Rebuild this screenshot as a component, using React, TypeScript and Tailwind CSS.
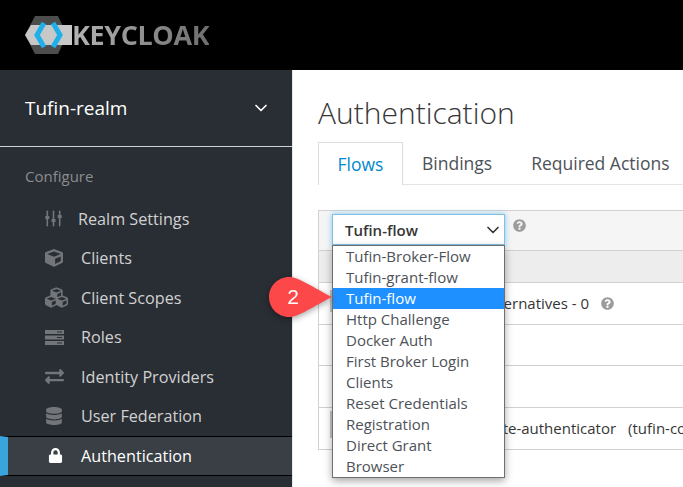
import { FaCube, FaCubes, FaDatabase, FaExchangeAlt, FaLock, FaQuestionCircle } from "react-icons/fa";
import { LuChevronDown } from "react-icons/lu";
import type { ReactNode } from "react";

const SlidersIcon = () => (
  <svg width="17" height="17" viewBox="0 0 17 17" fill="#72767b">
    <rect x="1.5" y="0.5" width="1.6" height="16" rx="0.8" />
    <rect x="7.7" y="0.5" width="1.6" height="16" rx="0.8" />
    <rect x="13.9" y="0.5" width="1.6" height="16" rx="0.8" />
    <rect x="0.3" y="6" width="4" height="3" rx="0.5" />
    <rect x="6.5" y="9" width="4" height="3" rx="0.5" />
    <rect x="12.7" y="5" width="4" height="3" rx="0.5" />
  </svg>
);

const ServiceIcon = () => (
  <svg width="19" height="15" viewBox="0 0 19 15" fill="#72767b">
    <path d="M0 0h19v4H0zM0 5.5h19v4H0zM0 11h19v4H0z" />
    <path d="M12 1.5h5v1h-5zM12 7h5v1h-5zM12 12.5h5v1h-5z" fill="#292e34" />
  </svg>
);

const navItems: { label: string; icon: ReactNode; textClass: string; active?: boolean }[] = [
  { label: "Realm Settings", icon: <SlidersIcon />, textClass: "ml-[16px]" },
  { label: "Clients", icon: <FaCube size={18} color="#72767b" />, textClass: "ml-[18px]" },
  { label: "Client Scopes", icon: <FaCubes size={23} color="#72767b" />, textClass: "ml-[13px]" },
  { label: "Roles", icon: <ServiceIcon />, textClass: "ml-[17px]" },
  { label: "Identity Providers", icon: <FaExchangeAlt size={19} color="#72767b" />, textClass: "ml-[17px]" },
  { label: "User Federation", icon: <FaDatabase size={18} color="#72767b" />, textClass: "ml-[18px]" },
  { label: "Authentication", icon: <FaLock size={15} color="#ffffff" />, textClass: "ml-[18px]", active: true },
];

const flowOptions = [
  "Tufin-Broker-Flow",
  "Tufin-grant-flow",
  "Tufin-flow",
  "Http Challenge",
  "Docker Auth",
  "First Broker Login",
  "Clients",
  "Reset Credentials",
  "Registration",
  "Direct Grant",
  "Browser",
];

function Logo() {
  return (
    <div className="flex items-center pl-[25px] h-[70px] bg-black shrink-0">
      <svg width="47" height="40" viewBox="0 0 47 40" className="shrink-0 blur-[0.4px]">
        <path d="M10 1h23l9 19-9 19H10L0 20z" fill="#4d4d4d" />
        <path d="M0 20l6-10h41v20H6z" fill="#c8c8c8" />
        <path d="M19 8l-7 12 7 12" fill="none" stroke="#1fb0ea" strokeWidth="5" />
        <path d="M28 8l7 12-7 12" fill="none" stroke="#1fb0ea" strokeWidth="5" />
      </svg>
      <span className="mb-[1px] text-[27px] font-bold leading-none tracking-[-0.4px] text-transparent bg-clip-text bg-gradient-to-r from-[#b4b4b4] to-[#6e6e6e] blur-[0.4px]">KEYCLOAK</span>
    </div>
  );
}

function Sidebar() {
  return (
    <aside className="w-[292px] shrink-0 bg-[#292e34]">
      <div className="flex items-center justify-between h-[77px] pl-[25px] pr-[21px] border-b border-[#d1d1d1]">
        <span className="text-[19px] text-white">Tufin-realm</span>
        <LuChevronDown size={20} color="#ffffff" strokeWidth={2} />
      </div>
      <div className="pl-[25px] pt-[19px] pb-[13px] text-[15px] leading-[20px] text-[#8b8d8f]">Configure</div>
      <nav className="flex flex-col">
        {navItems.map((item) => (
          <div
            key={item.label}
            className={`flex items-center h-[39.5px] text-[16.2px] ${
              item.active
                ? "bg-[#393f44] text-white border-y border-black border-l-8 border-l-[#39a5dc] pl-[37px]"
                : "pl-[45px] text-[#d1d1d1]"
            }`}
          >
            <span className={item.active ? "w-[15px] ml-[3px] flex justify-center" : "flex justify-center"}>{item.icon}</span>
            <span className={item.textClass}>{item.label}</span>
          </div>
        ))}
      </nav>
    </aside>
  );
}

function FlowDropdown() {
  return (
    <div className="absolute left-[13px] top-[34px] w-[173px] bg-white border border-[#6f6f6f] shadow-[0_3px_8px_rgba(0,0,0,0.35)] z-10">
      {flowOptions.map((option) => (
        <div
          key={option}
          className={`h-[21px] pl-[13px] text-[15px] leading-[21px] ${
            option === "Tufin-flow" ? "bg-[#1e90ff] text-white" : "text-[#4d5258]"
          }`}
        >
          {option}
        </div>
      ))}
    </div>
  );
}

function FlowTable() {
  return (
    <div className="relative mt-[25px] ml-[25px] border border-r-0 border-[#d1d1d1] text-[#363636]">
      <div className="flex items-start h-[40px] pl-[13px] pt-[3px] bg-[#f5f5f5] border-b border-[#d1d1d1]">
        <div className="flex items-center justify-between w-[173px] h-[31px] pl-[12px] pr-[1px] bg-white border border-[#7dc3e8] shadow-[0_0_6px_rgba(57,165,220,0.6)]">
          <span className="pt-[1px] text-[15px] font-semibold text-[#363636]">Tufin-flow</span>
          <LuChevronDown size={20} color="#333333" strokeWidth={2} />
        </div>
        <FaQuestionCircle size={13} color="#9c9c9c" className="ml-[8px] mt-[5px]" />
      </div>
      <div className="h-[32px] bg-[#ededed] border-b border-[#d1d1d1]" />
      <div className="relative flex items-center h-[42px] pl-[166px] bg-white border-b border-[#d1d1d1]">
        <div className="absolute left-[11px] top-[7px] w-[4px] h-[22px] bg-[#c9c9c9]" />
        <span className="text-[15px] whitespace-nowrap">Alternatives - 0</span>
        <FaQuestionCircle size={13} color="#9c9c9c" className="ml-[12px]" />
      </div>
      <div className="h-[41px] border-b border-[#d1d1d1]" />
      <div className="h-[42px] border-b border-[#d1d1d1]" />
      <div className="relative flex items-center h-[41px] pl-[87px] whitespace-nowrap overflow-hidden text-[15px]">
        <div className="absolute left-[11px] top-[3px] w-[4px] h-[27px] bg-[#c9c9c9]" />
        <span>tufin-composite-authenticator</span>
        <span className="ml-[12px]">(tufin-composite)</span>
      </div>
      <FlowDropdown />
    </div>
  );
}

function Callout() {
  return (
    <svg width="70" height="52" viewBox="0 0 70 52" className="absolute left-[266px] top-[271px] z-20 drop-shadow-[0_2px_3px_rgba(0,0,0,0.35)]">
      <path d="M23 6c9 0 18 7 43 20C41 39 32 46 23 46 12 46 3 37 3 26S12 6 23 6z" fill="#fc4848" />
      <text x="27" y="33" textAnchor="middle" fontSize="21" fill="#ffffff" fontFamily="'Liberation Sans', sans-serif">2</text>
    </svg>
  );
}

export default function App() {
  return (
    <div className="relative w-[683px] h-[487px] overflow-hidden bg-white flex flex-col font-['Open_Sans',sans-serif]">
      <Logo />
      <div className="flex flex-1 min-h-0">
        <Sidebar />
        <main className="flex-1 min-w-0 border-l border-[#e8e8e8]">
          <h1 className="ml-[25px] mt-[23px] text-[30px] leading-[40px] font-light text-[#363636]">Authentication</h1>
          <div className="flex mt-[9px] ml-[25px] h-[43px] border-b border-[#e5e5e5] text-[17.5px]">
            <div className="flex items-center justify-center w-[85px] h-[43px] bg-white border border-b-0 border-[#dcdcdc] text-[#0088ce]">Flows</div>
            <div className="flex items-center pl-[19px] text-[#4d5258]">Bindings</div>
            <div className="flex items-center pl-[39px] whitespace-nowrap text-[#4d5258]">Required Actions</div>
          </div>
          <FlowTable />
        </main>
      </div>
      <Callout />
    </div>
  );
}
